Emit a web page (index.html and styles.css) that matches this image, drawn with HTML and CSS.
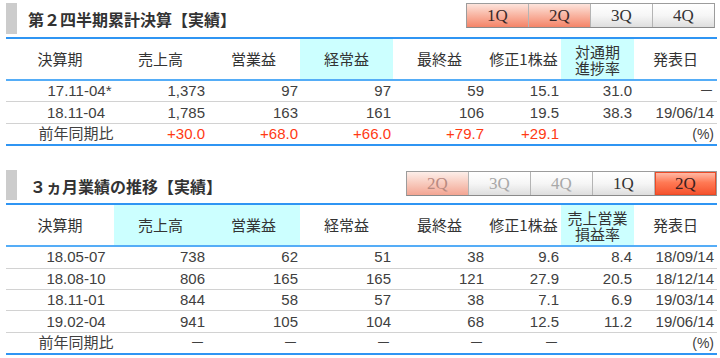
FILE: index.html
```html
<!DOCTYPE html>
<html lang="ja">
<head>
<meta charset="utf-8">
<title>業績</title>
<link rel="stylesheet" href="styles.css">
</head>
<body>
<section class="sec">
  <div class="sec-head">
    <h2 class="sec-title">第２四半期累計決算【実績】</h2>
    <div class="tabs tabs-top">
      <span class="tab on">1Q</span>
      <span class="tab on">2Q</span>
      <span class="tab">3Q</span>
      <span class="tab">4Q</span>
    </div>
  </div>
  <table class="fin">
    <colgroup>
      <col class="c1"><col class="c2"><col class="c2"><col class="c2"><col class="c2"><col class="c6"><col class="c7"><col class="c8">
    </colgroup>
    <thead>
      <tr>
        <th>決算期</th><th>売上高</th><th>営業益</th><th class="hl">経常益</th><th>最終益</th><th>修正1株益</th><th class="hl two"><span class="wrap3">対通期進捗率</span></th><th>発表日</th>
      </tr>
    </thead>
    <tbody>
      <tr><td class="term">17.11-04<span class="star">*</span></td><td>1,373</td><td>97</td><td>97</td><td>59</td><td>15.1</td><td>31.0</td><td class="date">－</td></tr>
      <tr><td class="term">18.11-04</td><td>1,785</td><td>163</td><td>161</td><td>106</td><td>19.5</td><td>38.3</td><td class="date">19/06/14</td></tr>
      <tr class="last"><td class="term">前年同期比</td><td class="up">+30.0</td><td class="up">+68.0</td><td class="up">+66.0</td><td class="up">+79.7</td><td class="up">+29.1</td><td></td><td class="date pct">(%)</td></tr>
    </tbody>
  </table>
</section>

<section class="sec sec2">
  <div class="sec-head">
    <h2 class="sec-title">３ヵ月業績の推移【実績】</h2>
    <div class="tabs tabs-bottom">
      <span class="tab dim-on">2Q</span>
      <span class="tab dim">3Q</span>
      <span class="tab dim">4Q</span>
      <span class="tab">1Q</span>
      <span class="tab hot">2Q</span>
    </div>
  </div>
  <table class="fin">
    <colgroup>
      <col class="c1"><col class="c2"><col class="c2"><col class="c2"><col class="c2"><col class="c6"><col class="c7"><col class="c8">
    </colgroup>
    <thead>
      <tr>
        <th>決算期</th><th class="hl">売上高</th><th class="hl">営業益</th><th>経常益</th><th>最終益</th><th>修正1株益</th><th class="hl two"><span class="wrap4">売上営業損益率</span></th><th>発表日</th>
      </tr>
    </thead>
    <tbody>
      <tr><td class="term">18.05-07</td><td>738</td><td>62</td><td>51</td><td>38</td><td>9.6</td><td>8.4</td><td class="date">18/09/14</td></tr>
      <tr><td class="term">18.08-10</td><td>806</td><td>165</td><td>165</td><td>121</td><td>27.9</td><td>20.5</td><td class="date">18/12/14</td></tr>
      <tr><td class="term">18.11-01</td><td>844</td><td>58</td><td>57</td><td>38</td><td>7.1</td><td>6.9</td><td class="date">19/03/14</td></tr>
      <tr><td class="term">19.02-04</td><td>941</td><td>105</td><td>104</td><td>68</td><td>12.5</td><td>11.2</td><td class="date">19/06/14</td></tr>
      <tr class="last"><td class="term">前年同期比</td><td>－</td><td>－</td><td>－</td><td>－</td><td>－</td><td></td><td class="date pct">(%)</td></tr>
    </tbody>
  </table>
</section>
</body>
</html>
```
FILE: styles.css
```css
* { box-sizing: border-box; }

body {
  margin: 0;
  background: #ffffff;
  font-family: "Liberation Sans", "Noto Sans CJK JP", sans-serif;
  color: #404040;
}

.sec2 { margin-top: 24px; }

.sec-head {
  display: flex;
  justify-content: space-between;
  align-items: flex-start;
  margin: 3px 0 3px 6px;
}

.sec-title {
  margin: 0;
  height: 31px;
  border-left: 11px solid #cccccc;
  padding-left: 11px;
  font-family: "Noto Sans CJK JP", sans-serif;
  font-size: 16px;
  font-weight: bold;
  line-height: 33px;
  color: #333333;
}

.sec2 .sec-title { height: 30px; line-height: 32px; padding-left: 13px; }

.tabs {
  display: flex;
  border: 1px solid #9c9c9c;
  border-bottom-color: #8a8a8a;
}
.tabs-top { margin-right: 5px; }
.tabs-bottom { margin-top: 1px; margin-right: 3px; }

.tab {
  width: 62px;
  height: 23px;
  border-left: 1px solid #b4b4b4;
  font-family: "Liberation Serif", serif;
  font-size: 17px;
  line-height: 24px;
  text-align: center;
  color: #333333;
  background: linear-gradient(to bottom, #ffffff 0%, #f6f6f6 50%, #dedede 100%);
}
.tab:first-child { border-left: 0; width: 61px; }

.tab.on {
  background: linear-gradient(to bottom, #fde4dc 0%, #f9b8a6 45%, #f48468 100%);
  color: #3a2a2a;
}
.tab.dim-on {
  background: linear-gradient(to bottom, #fdeee9 0%, #f8cabd 50%, #f3a593 100%);
  color: #b98a80;
}
.tab.dim { color: #a8a8a8; }
.tab.hot {
  background: linear-gradient(to bottom, #ffc0ae 0%, #ff7a55 45%, #f5502b 100%);
  box-shadow: inset 0 0 0 1px #ec4a26;
  color: #3a2020;
}

.fin {
  margin-left: 6px;
  width: 711px;
  table-layout: fixed;
  border-collapse: separate;
  border-spacing: 0;
}
.c1 { width: 108px; }
.c2 { width: 93px; }
.c6 { width: 75px; }
.c7 { width: 73px; }
.c8 { width: 83px; }

.fin th {
  height: 44px;
  padding: 0;
  border-top: 2px solid #2f95f3;
  border-bottom: 2px solid #55adf7;
  font-family: "Noto Sans CJK JP", sans-serif;
  font-size: 15px;
  font-weight: normal;
  line-height: 16px;
  color: #333333;
  text-align: center;
  vertical-align: middle;
}
.fin th.hl { background: #ccffff; }
.fin th.two { line-height: 16px; padding-top: 1px; }

.wrap3, .wrap4 { display: inline-block; }
.wrap3 { width: 46px; }
.wrap4 { width: 61px; }

.fin td {
  height: 21.4px;
  padding: 0 2px 0 0;
  border-bottom: 1px solid #d2d2d2;
  font-size: 15px;
  line-height: 18px;
  text-align: right;
  white-space: nowrap;
  vertical-align: middle;
}
.fin tr.last td {
  height: 22.4px;
  border-bottom: 2px solid #2f95f3;
}

.fin td.term {
  text-align: center;
  padding: 0 0 0 32px;
}
.star { margin-right: -7px; }

.fin td.date { padding-right: 3px; }
.fin td.pct { font-size: 14px; }

.up { color: #ff3a14; }
```
